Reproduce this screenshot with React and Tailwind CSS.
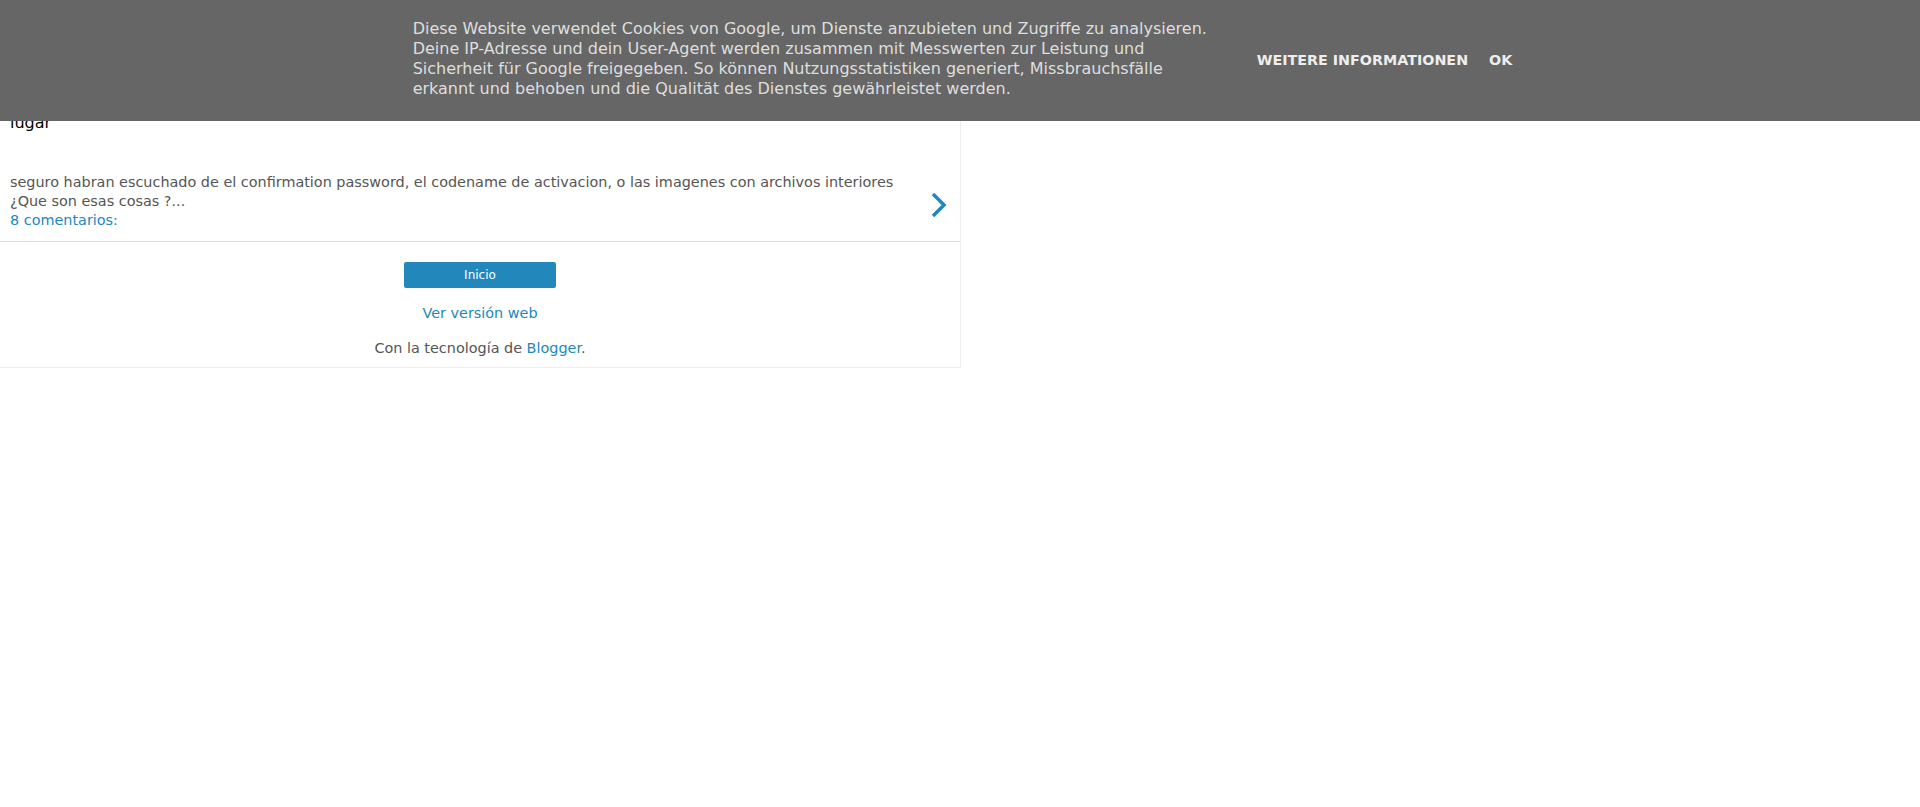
function Chevron() {
  return (
    <svg viewBox="0 0 16 26" className="h-[26px] w-[16px]" fill="none" stroke="#2288bb" strokeWidth="3.5" strokeLinecap="butt" strokeLinejoin="miter">
      <path d="M2 2l11 11L2 24" />
    </svg>
  );
}

function CookieBar() {
  return (
    <div className="fixed left-0 right-0 top-0 z-10 flex h-[121px] justify-center bg-[#666666] pl-[5px] pt-[19px] font-['DejaVu_Sans',sans-serif]">
      <div className="w-[800px] text-[16px] leading-[20px] text-[#dedede]">
        Diese Website verwendet Cookies von Google, um Dienste anzubieten und Zugriffe zu analysieren. Deine IP-Adresse und dein
        User-Agent werden zusammen mit Messwerten zur Leistung und Sicherheit für Google freigegeben. So können
        Nutzungsstatistiken generiert, Missbrauchsfälle erkannt und behoben und die Qualität des Dienstes gewährleistet werden.
      </div>
      <div className="ml-[44px] flex items-start gap-[21px] pt-[31px] text-[14.3px] font-bold uppercase leading-[20px] text-[#eeeeee]">
        <span>Weitere Informationen</span>
        <span>OK</span>
      </div>
    </div>
  );
}

export default function App() {
  return (
    <div className="min-h-[807px] bg-white font-['DejaVu_Sans',sans-serif]">
      <CookieBar />
      <div className="w-[961px] border-b border-r border-[#eeeeee] bg-white">
        <div className="flex items-center pb-[11px] pl-[10px] pr-[13px] pt-[113px]">
          <div className="flex-1">
            <h3 className="text-[16px] leading-[20px] text-black">lugar</h3>
            <div className="mt-[40px] text-[14.4px] leading-[19px] text-[#555555]">
              <p>seguro habran escuchado de el confirmation password, el codename de activacion, o las imagenes con archivos interiores</p>
              <p>¿Que son esas cosas ?...</p>
              <a className="text-[#2288bb]">8 comentarios:</a>
            </div>
          </div>
          <div className="mt-[66px]">
            <Chevron />
          </div>
        </div>
        <div className="flex flex-col items-center border-t border-[#dddddd] pb-[9px] pt-[20px]">
          <a className="flex h-[26px] w-[152px] items-center justify-center rounded-[2px] bg-[#2288bb] text-[12px] text-white">
            Inicio
          </a>
          <a className="mt-[15px] text-[14.4px] leading-[20px] text-[#2288bb]">Ver versión web</a>
          <p className="mt-[15px] text-[14.4px] leading-[20px] text-[#555555]">
            Con la tecnología de <a className="text-[#2288bb]">Blogger</a>.
          </p>
        </div>
      </div>
    </div>
  );
}
